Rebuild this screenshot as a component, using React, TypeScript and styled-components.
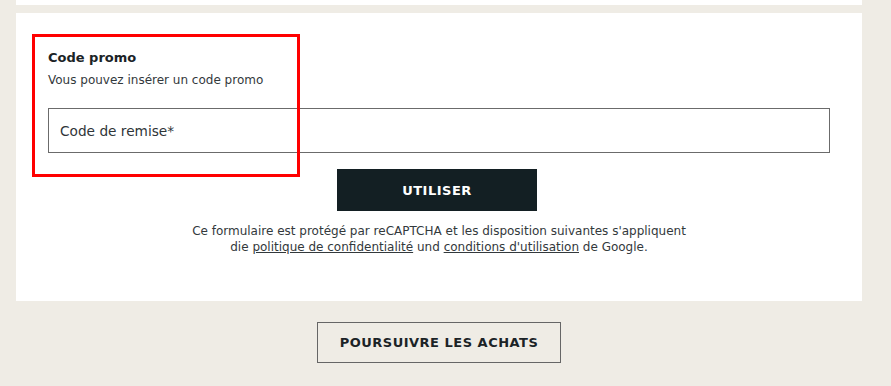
import React from "react";
import styled, { createGlobalStyle } from "styled-components";

const Global = createGlobalStyle`
  html, body { margin: 0; padding: 0; background: #efece5; }
  body { font-family: "DejaVu Sans", "Open Sans", sans-serif; color: #1b2326; }
`;

const Page = styled.div`
  width: 846px;
  margin-left: 16px;
  display: flex;
  flex-direction: column;
  align-items: stretch;
  padding-bottom: 40px;
`;

const TopCard = styled.div`
  background: #ffffff;
  height: 5px;
`;

const Card = styled.section`
  position: relative;
  background: #ffffff;
  margin-top: 8px;
  padding: 35px 32px 46px;
  display: flex;
  flex-direction: column;
`;

const Title = styled.h2`
  margin: 0;
  font-size: 13px;
  line-height: 20px;
  font-weight: 700;
  color: #1b2326;
`;

const Subtitle = styled.p`
  margin: 4px 0 0;
  font-size: 12px;
  line-height: 16px;
  color: #33393c;
`;

const Input = styled.input`
  margin-top: 20px;
  height: 45px;
  box-sizing: border-box;
  width: 100%;
  border: 1px solid #6b6b6b;
  padding: 0 11px;
  font-family: inherit;
  font-size: 13.7px;
  color: #1b2326;
  background: #fff;
  outline: none;
  &::placeholder { color: #2f3538; opacity: 1; }
`;

const Button = styled.button<{ $outline?: boolean; $w: number }>`
  align-self: center;
  box-sizing: border-box;
  width: ${(p) => p.$w}px;
  height: ${(p) => (p.$outline ? 41 : 42)}px;
  font-family: inherit;
  font-size: 13px;
  font-weight: 700;
  letter-spacing: 0.5px;
  text-transform: uppercase;
  cursor: pointer;
  color: ${(p) => (p.$outline ? "#1b2326" : "#ffffff")};
  background: ${(p) => (p.$outline ? "transparent" : "#131f23")};
  border: ${(p) => (p.$outline ? "1px solid #666" : "none")};
`;

const SubmitButton = styled(Button)`
  margin-top: 16px;
  margin-left: -4px;
`;

const ContinueButton = styled(Button)`
  margin-top: 21px;
`;

const Legal = styled.p`
  margin: 12px 0 0;
  text-align: center;
  font-size: 12px;
  line-height: 16px;
  color: #33393c;
`;

const LegalLink = styled.a`
  color: inherit;
  text-decoration: underline;
`;

const Highlight = styled.div`
  position: absolute;
  left: 16px;
  top: 21px;
  width: 268px;
  height: 143px;
  box-sizing: border-box;
  border: 3px solid #ff0000;
  pointer-events: none;
`;

export default function App() {
  return (
    <>
      <Global />
      <Page>
        <TopCard />
        <Card>
          <Title>Code promo</Title>
          <Subtitle>Vous pouvez insérer un code promo</Subtitle>
          <Input placeholder="Code de remise*" />
          <SubmitButton $w={200}>Utiliser</SubmitButton>
          <Legal>
            Ce formulaire est protégé par reCAPTCHA et les disposition suivantes s'appliquent
            <br />
            die <LegalLink href="#">politique de confidentialité</LegalLink> und{" "}
            <LegalLink href="#">conditions d'utilisation</LegalLink> de Google.
          </Legal>
          <Highlight />
        </Card>
        <ContinueButton $outline $w={244}>Poursuivre les achats</ContinueButton>
      </Page>
    </>
  );
}
